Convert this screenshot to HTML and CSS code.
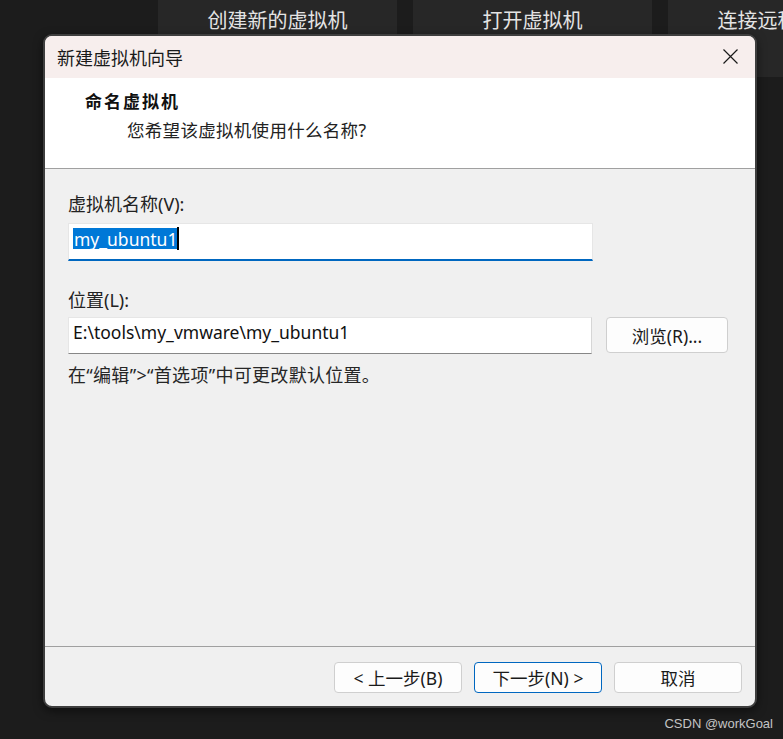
FILE: index.html
```html
<!DOCTYPE html>
<html lang="zh-CN">
<head>
<meta charset="utf-8">
<title>新建虚拟机向导</title>
<link rel="stylesheet" href="styles.css">
</head>
<body>
<div class="desktop">
  <div class="tiles">
    <div class="tile">创建新的虚拟机</div>
    <div class="tile">打开虚拟机</div>
    <div class="tile">连接远程服务器</div>
  </div>

  <div class="dialog">
    <div class="titlebar">
      <span class="title">新建虚拟机向导</span>
      <svg class="close" width="15" height="15" viewBox="0 0 15 15"><path d="M0.5 0.5 L14.5 14.5 M14.5 0.5 L0.5 14.5" stroke="#1a1a1a" stroke-width="1.2" fill="none"/></svg>
    </div>
    <div class="header">
      <div class="h-title">命名虚拟机</div>
      <div class="h-sub">您希望该虚拟机使用什么名称?</div>
    </div>
    <div class="body">
      <div class="label">虚拟机名称(V):</div>
      <div class="input focused"><span class="sel">my_ubuntu1</span><span class="caret"></span></div>
      <div class="label label2">位置(L):</div>
      <div class="row">
        <div class="input path">E:\tools\my_vmware\my_ubuntu1</div>
        <div class="btn browse">浏览(R)...</div>
      </div>
      <div class="hint">在“编辑”&gt;“首选项”中可更改默认位置。</div>
    </div>
    <div class="footer">
      <div class="btn">&lt; 上一步(B)</div>
      <div class="btn primary">下一步(N) &gt;</div>
      <div class="btn">取消</div>
    </div>
  </div>

  <div class="watermark">CSDN @workGoal</div>
</div>
</body>
</html>
```
FILE: styles.css
```css
* { box-sizing: border-box; }
html, body {
  margin: 0;
  padding: 0;
  width: 783px;
  height: 739px;
  overflow: hidden;
  background: #1c1c1c;
  font-family: "Noto Sans", "Noto Sans CJK SC", sans-serif;
}
.desktop {
  position: relative;
  width: 783px;
  height: 739px;
  overflow: hidden;
  background: #1c1c1c;
}
.tiles {
  display: flex;
  gap: 16px;
  padding-left: 158px;
  height: 77px;
}
.tile {
  flex: 0 0 239px;
  height: 77px;
  background: #272727;
  color: #e4e4e4;
  font-family: "Noto Sans CJK SC", sans-serif;
  font-size: 20px;
  line-height: 28px;
  padding-top: 6px;
  text-align: center;
  white-space: nowrap;
  overflow: hidden;
}

.dialog {
  position: absolute;
  left: 43px;
  top: 34px;
  width: 714px;
  height: 674px;
  border: 2px solid #3e3e3e;
  border-radius: 9px;
  overflow: hidden;
  background: #f0f0f0;
  box-shadow: 0 3px 10px rgba(0,0,0,0.5);
  display: flex;
  flex-direction: column;
  color: #1e1e1e;
  font-size: 17.5px;
}
.titlebar {
  height: 42px;
  flex: 0 0 42px;
  background: #f7eeed;
  display: flex;
  align-items: center;
  justify-content: space-between;
  padding: 0 17px 0 12px;
}
.title {
  font-family: "Noto Sans CJK SC", sans-serif;
  font-size: 18px;
  color: #1a1a1a;
  line-height: 24px;
}
.close { display: block; margin-top: -2px; }

.header {
  flex: 0 0 91px;
  background: #ffffff;
  border-bottom: 1px solid #a0a0a0;
  padding: 11px 0 0 40px;
}
.h-title {
  font-family: "Noto Sans CJK SC", sans-serif;
  font-weight: 700;
  font-size: 17px;
  letter-spacing: 2px;
  line-height: 24px;
  color: #111;
}
.h-sub {
  margin: 5px 0 0 42px;
  font-size: 17.5px;
  letter-spacing: 0.3px;
  line-height: 24px;
  color: #222;
}

.body {
  flex: 1 1 auto;
  padding: 23px 0 0 23px;
  border-bottom: 1px solid #a0a0a0;
}
.label {
  line-height: 24px;
  height: 24px;
  font-size: 18px;
  color: #222;
}
.label2 { margin-top: 27px; }
.input {
  margin-top: 7px;
  width: 525px;
  height: 38px;
  background: #ffffff;
  border: 1px solid #e6e6e6;
  border-bottom: 2px solid #0067c0;
  padding: 3px 0 0 4px;
  display: flex;
  align-items: flex-start;
  font-size: 17.5px;
  line-height: 20px;
}
.sel {
  background: #0078d7;
  color: #ffffff;
  padding: 1px 0 0 1px;
  height: 21px;
  margin-top: 1px;
}
.caret {
  display: inline-block;
  width: 2px;
  height: 23px;
  background: #000;
}
.row {
  display: flex;
  align-items: flex-start;
  gap: 14px;
  margin-top: 5px;
}
.row .input {
  margin-top: 0;
  width: 524px;
  height: 37px;
  border-bottom: 1px solid #878787;
  border-right: 1px solid #d6d6d6;
  padding: 4px 0 0 4px;
  color: #111;
}
.hint {
  margin-top: 9px;
  line-height: 24px;
  font-size: 18px;
  letter-spacing: 0.3px;
  color: #262626;
}

.btn {
  width: 128px;
  height: 31px;
  background: #fdfdfd;
  border: 1px solid #cfcfcf;
  border-radius: 4px;
  display: flex;
  align-items: center;
  justify-content: center;
  font-size: 17.5px;
  color: #1a1a1a;
  white-space: nowrap;
}
.browse {
  width: 122px;
  height: 36px;
}
.btn.primary {
  border-color: #0067c0;
}
.footer {
  flex: 0 0 59px;
  display: flex;
  justify-content: flex-end;
  gap: 12px;
  padding: 15px 13px 0 0;
}

.watermark {
  position: absolute;
  right: 10px;
  top: 714px;
  font-family: "Liberation Sans", sans-serif;
  font-size: 13px;
  color: #c4c4c4;
  line-height: 20px;
}
```
